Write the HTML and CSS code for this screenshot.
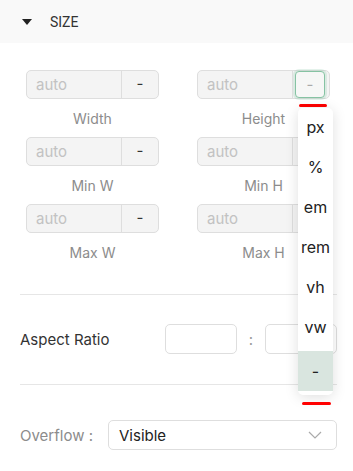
FILE: index.html
```html
<!DOCTYPE html>
<html lang="en">
<head>
  <meta charset="UTF-8" />
  <meta name="viewport" content="width=device-width, initial-scale=1.0"/>
  <title>Size panel</title>
  <link rel="stylesheet" href="styles.css">
</head>
<body>

<div class="panel">
  <div class="panel-head">
    <span class="caret"></span>
    <span class="panel-title">SIZE</span>
  </div>

  <div class="dims">
    <div class="dim">
      <div class="unit-input"><span class="val">auto</span><span class="unit">-</span></div>
      <div class="dim-label">Width</div>
    </div>
    <div class="dim">
      <div class="unit-input"><span class="val">auto</span><span class="unit focused"><span class="focus-ring">-</span></span></div>
      <div class="dim-label">Height</div>
    </div>
    <div class="dim">
      <div class="unit-input"><span class="val">auto</span><span class="unit">-</span></div>
      <div class="dim-label">Min W</div>
    </div>
    <div class="dim">
      <div class="unit-input"><span class="val">auto</span><span class="unit">-</span></div>
      <div class="dim-label">Min H</div>
    </div>
    <div class="dim">
      <div class="unit-input"><span class="val">auto</span><span class="unit">-</span></div>
      <div class="dim-label">Max W</div>
    </div>
    <div class="dim">
      <div class="unit-input"><span class="val">auto</span><span class="unit">-</span></div>
      <div class="dim-label">Max H</div>
    </div>
  </div>

  <hr class="divider">

  <div class="ratio-row">
    <span class="ratio-label">Aspect Ratio</span>
    <span class="ratio-box"></span>
    <span class="ratio-colon">:</span>
    <span class="ratio-box"></span>
  </div>

  <hr class="divider">

  <div class="overflow-row">
    <span class="overflow-label">Overflow :</span>
    <div class="select">
      <span>Visible</span>
      <svg class="chevron" width="14" height="8" viewBox="0 0 14 8"><path d="M1 1 L7 7 L13 1" fill="none" stroke="#aaa" stroke-width="1.2"/></svg>
    </div>
  </div>

  <!-- unit menu, open over the height field -->
  <span class="mark mark-top"></span>
  <ul class="unit-menu">
    <li>px</li>
    <li>%</li>
    <li>em</li>
    <li>rem</li>
    <li>vh</li>
    <li>vw</li>
    <li class="active">-</li>
  </ul>
  <span class="mark mark-bottom"></span>
</div>

</body>
</html>
```

FILE: styles.css
```css
* {
  box-sizing: border-box;
}

body {
  margin: 0;
  font-family: Inter, 'Noto Sans', sans-serif;
  background: #ffffff;
  color: #333;
}

.panel {
  position: relative;
  width: 353px;
  height: 471px;
  overflow: hidden;
}

.panel-head {
  height: 43px;
  background: #f9f9f9;
  display: flex;
  align-items: center;
  padding-left: 22px;
}

.caret {
  width: 0;
  height: 0;
  border-left: 5px solid transparent;
  border-right: 5px solid transparent;
  border-top: 6px solid #222;
  margin-right: 18px;
}

.panel-title {
  font-family: Roboto, sans-serif;
  font-size: 14px;
  color: #333;
}

.dims {
  display: grid;
  grid-template-columns: 133px 133px;
  column-gap: 38px;
  padding: 27px 0 0 26px;
}

.dim {
  height: 67px;
}

.unit-input {
  display: flex;
  height: 29px;
  border: 1px solid #dedede;
  border-radius: 5px;
  background: #f4f4f4;
}

.val {
  flex: 1;
  padding-left: 9px;
  line-height: 27px;
  font-size: 15px;
  color: #c2c2c2;
}

.unit {
  width: 37px;
  border-left: 1px solid #dedede;
  text-align: center;
  line-height: 26px;
  font-size: 15px;
  color: #333;
}

.unit.focused {
  padding: 0 4px 0 2px;
  line-height: 0;
}

.focus-ring {
  display: block;
  height: 27px;
  line-height: 25px;
  border: 1px solid #86c3a3;
  border-radius: 4px;
  box-shadow: 0 0 0 2px rgba(134, 195, 163, 0.22);
  color: #aaa;
  background: #f6f7f6;
}

.dim-label {
  margin-top: 10px;
  line-height: 20px;
  text-align: center;
  font-size: 14px;
  color: #8c8c8c;
}

.divider {
  margin: 23px 16px 0 20px;
  border: 0;
  border-top: 1px solid #e6e6e6;
}

.ratio-row {
  display: flex;
  align-items: center;
  padding: 29px 16px 30px 20px;
}

.ratio-label {
  width: 145px;
  font-size: 15px;
  color: #333;
}

.ratio-box {
  width: 72px;
  height: 30px;
  border: 1px solid #dedede;
  border-radius: 5px;
}

.ratio-colon {
  width: 28px;
  text-align: center;
  font-size: 15px;
  color: #999;
}

.ratio-row + .divider {
  margin-top: 0;
}

.overflow-row {
  display: flex;
  align-items: center;
  padding: 35px 16px 0 20px;
}

.overflow-label {
  width: 88px;
  font-size: 15px;
  color: #8c8c8c;
}

.select {
  flex: 1;
  height: 30px;
  display: flex;
  align-items: center;
  justify-content: space-between;
  padding: 0 14px 0 10px;
  border: 1px solid #dedede;
  border-radius: 5px;
  font-size: 15px;
  color: #222;
}

.unit-menu {
  position: absolute;
  left: 298px;
  top: 108px;
  width: 35px;
  margin: 0;
  padding: 0 0 4px;
  list-style: none;
  background: #fff;
  border-radius: 5px;
  box-shadow: 0 2px 14px rgba(0, 0, 0, 0.13);
}

.unit-menu li {
  height: 40px;
  line-height: 38px;
  text-align: center;
  font-size: 16px;
  color: #222;
}

.unit-menu li.active {
  margin-top: 3px;
  line-height: 40px;
  background: #d9e5df;
}

.mark {
  position: absolute;
  height: 3px;
  border-radius: 2px;
  background: #f00;
}

.mark-top {
  left: 299px;
  top: 104px;
  width: 28px;
}

.mark-bottom {
  left: 302px;
  top: 402px;
  width: 29px;
}
```
